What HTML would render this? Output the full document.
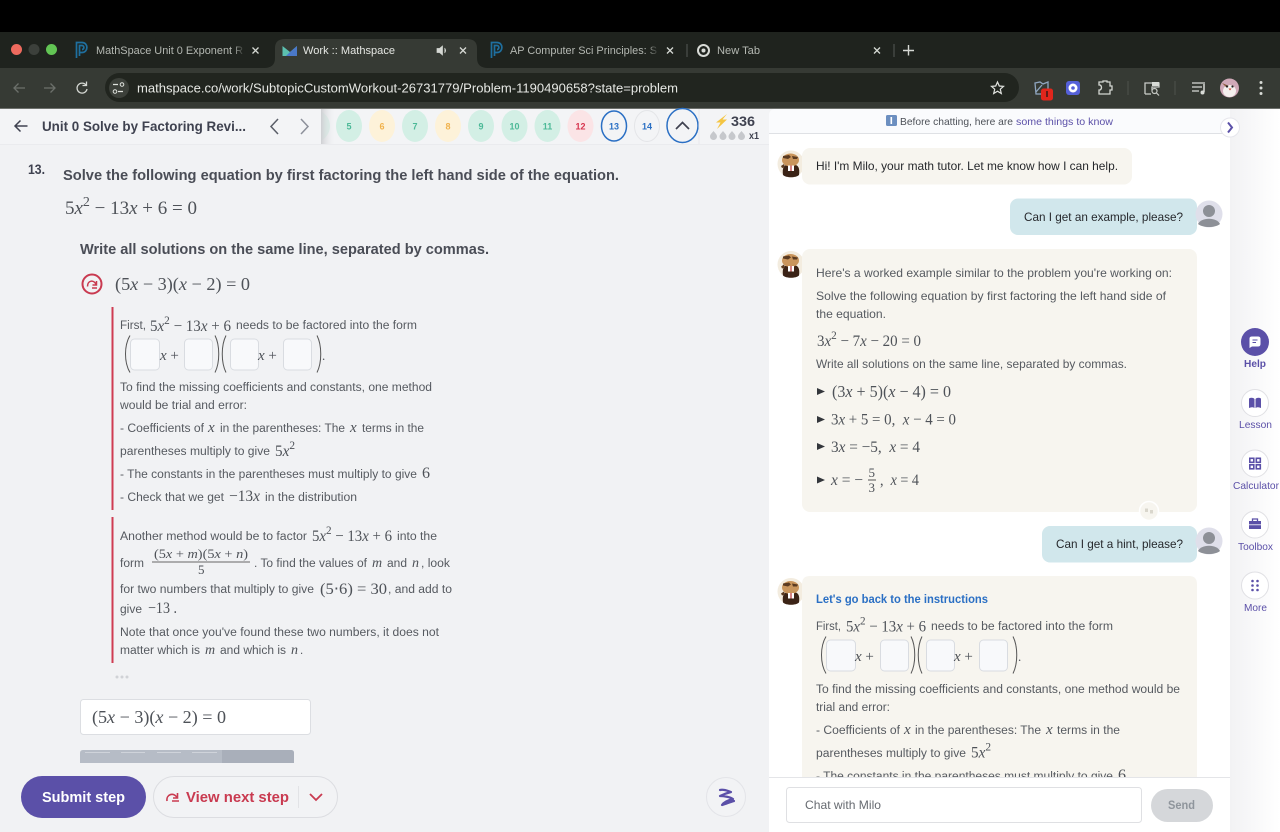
<!DOCTYPE html>
<html><head><meta charset="utf-8"><title>Work :: Mathspace</title>
<style>
html,body{margin:0;padding:0;background:#000;width:1280px;height:832px;overflow:hidden}
svg{display:block;filter:blur(.35px)}
text{font-family:"Liberation Sans",sans-serif;font-size:11.5px;fill:#565a60;white-space:pre}
.m,.m tspan{font-family:"Liberation Serif",serif}
.m{font-size:16px;fill:#4e5258}
.i{font-style:italic}
.tab{font-size:11px;fill:#b4b8b2}
.b{font-weight:bold}
.d{fill:#3f4250}
.c{font-size:12px}
.k{fill:#26282c}
.p{font-size:9px;font-weight:bold;text-anchor:middle}
.s{font-size:10.5px;fill:#5b50a8}
</style></head><body>
<svg width="1280" height="832" viewBox="0 0 1280 832" xmlns="http://www.w3.org/2000/svg">
<defs>
<g id="milo"><circle r="13.500" fill="#f3ecdf"/><path d="M-8 11C-9 4-7 1-4 1H4C7 1 9 4 8 11C5 14-5 14-8 11Z" fill="#3b2316"/><ellipse cx="-.5" cy="-4" rx="8.500" ry="6.500" fill="#c9955c"/><path d="M-8-8L-2-9 0-7-3-5-8-6ZM1-8L7-7 6-5 2-5Z" fill="#5a3a20"/><path d="M-10 2L-7 0-6 3-9 4Z" fill="#5a3a20"/><path d="M-3 1.500H3V7H-3Z" fill="#fff"/><path d="M-.6 1.500H.6V7H-.6Z" fill="#b33"/></g>
<g id="user"><circle r="13.500" fill="#dfdfea"/><circle cy="-3" r="6" fill="#8d9097"/><path d="M-11 10C-8 3 8 3 11 10C6 14-6 14-11 10Z" fill="#8d9097"/></g>
<g id="pp" fill="none" stroke="#1f6f9f" stroke-width="1.700"><path d="M-4.500 8V-7.500H1C7.500-7.500 7.500 2.500 1 2.500H-1.500"/><path d="M-1.500 6V-4.500H1C3.500-4.500 3.500-.5 1-.5"/></g>
<path id="x" d="M-3-3L3 3M3-3L-3 3" stroke="#d5d8d3" stroke-width="1.300" fill="none"/>
<path id="tri" d="M-4-3.500L4 0-4 3.500Z" fill="#33363b"/>
<path id="drop" d="M0-5C1.500-3 3.500-1.500 3.500.5A3.500 3.500 0 0 1-3.500.5C-3.500-1.500-1.500-3 0-5Z" fill="#c6c8cc"/>
<g id="boxes"><path d="M5 0C-1 10-1 27 5 37M90 0C95 10 95 27 90 37M101 0C96 10 96 27 101 37M192 0C197 10 197 27 192 37" fill="none" stroke="#555" stroke-width="1"/>
<g fill="#f8f9fb" stroke="#d9dce1"><rect x="5.500" y="3.500" width="29" height="31" rx="4"/><rect x="59.500" y="3.500" width="28" height="31" rx="4"/><rect x="105.500" y="3.500" width="28" height="31" rx="4"/><rect x="158.500" y="3.500" width="28" height="31" rx="4"/></g></g>
<linearGradient id="fade"><stop offset="0" stop-color="#1f231e" stop-opacity="0"/><stop offset="1" stop-color="#1f231e"/></linearGradient>
<linearGradient id="fd"><stop offset="0" stop-color="#cfd0d3"/><stop offset="1" stop-color="#f3f4f6" stop-opacity="0"/></linearGradient>
<linearGradient id="sb"><stop offset="0" stop-color="#f2f2f4"/><stop offset="1" stop-color="#fff"/></linearGradient>
</defs>

<!-- browser chrome -->
<rect width="1280" height="32" fill="#000"/>
<rect y="32" width="1280" height="37" fill="#1f231e"/>
<rect y="68" width="1280" height="40" fill="#363a34"/>
<circle cx="16.500" cy="49.500" r="5.500" fill="#ee6a5e"/><circle cx="34" cy="49.500" r="5.500" fill="#3c403b"/><circle cx="51.500" cy="49.500" r="5.500" fill="#62c554"/>
<path d="M264 68Q275 68 275 58V48Q275 39 285 39H467Q477 39 477 48V58Q477 68 488 68Z" fill="#363a34"/>
<use href="#pp" x="81" y="50"/><use href="#pp" x="496" y="50"/>
<path d="M282.500 46L290 52 297 46V56H282.500Z" fill="#5cc0b0"/><path d="M290 52L297 46V56H286Z" fill="#4a78c8"/>
<text class="tab" x="96" y="54" textLength="147" lengthAdjust="spacingAndGlyphs">MathSpace Unit 0 Exponent R</text>
<rect x="233" y="42" width="12" height="16" fill="url(#fade)"/>
<text class="tab" x="303" y="54" textLength="92" lengthAdjust="spacingAndGlyphs" style="fill:#e4e6e2">Work :: Mathspace</text>
<text class="tab" x="510" y="54" textLength="147" lengthAdjust="spacingAndGlyphs">AP Computer Sci Principles: S</text>
<rect x="647" y="42" width="12" height="16" fill="url(#fade)"/>
<text class="tab" x="717" y="54" textLength="43" lengthAdjust="spacingAndGlyphs">New Tab</text>
<use href="#x" x="255.500" y="50.500"/><use href="#x" x="463" y="50.500"/><use href="#x" x="670" y="50.500"/><use href="#x" x="877" y="50.500"/>
<path d="M437 48.500H439.500L442.500 46V55L439.500 52.500H437ZM444.500 48C446 49.500 446 51.500 444.500 53" fill="#d5d8d3" stroke="#d5d8d3" stroke-width=".7"/>
<path d="M687 44V57M894 44V57" stroke="#555955"/>
<circle cx="703.500" cy="50.500" r="5.500" fill="#1f231e" stroke="#d8dbd6" stroke-width="2"/><circle cx="703.500" cy="50.500" r="2" fill="#d8dbd6"/>
<path d="M908.500 45V55.500M903 50.500H914" stroke="#d5d8d3" stroke-width="1.400"/>
<rect x="105" y="73" width="914" height="29" rx="14.500" fill="#21251f"/>
<circle cx="119" cy="88" r="10" fill="#3c403a"/>
<path d="M113 84.500H118M123 91.500H118" stroke="#dfe2dd" stroke-width="1.200"/><circle cx="122" cy="84.500" r="1.800" fill="none" stroke="#dfe2dd"/><circle cx="115" cy="91.500" r="1.800" fill="none" stroke="#dfe2dd"/>
<path d="M25 88H14M18.500 83.500L14 88l4.500 4.500" fill="none" stroke="#6c706b" stroke-width="1.300"/>
<path d="M44 88H55M50.500 83.500L55 88l-4.500 4.500" fill="none" stroke="#6c706b" stroke-width="1.300"/>
<path d="M86 85A5 5 0 1 0 87 89M86.500 81.500V85.500H82.500" fill="none" stroke="#d5d8d3" stroke-width="1.300"/>
<text x="137" y="92.500" textLength="541" lengthAdjust="spacingAndGlyphs" style="font-size:13px;fill:#e6e8e4">mathspace.co/work/SubtopicCustomWorkout-26731779/Problem-1190490658?state=problem</text>
<path d="M997.500 82L999.300 86 1003.500 86.400 1000.300 89.200 1001.300 93.500 997.500 91.200 993.700 93.500 994.700 89.200 991.500 86.400 995.700 86Z" fill="none" stroke="#e2e4e0" stroke-width="1.200"/>
<path d="M1035 83L1040 82 1043 84 1048 82V90L1042 94 1036 94ZM1036 92L1042 85" fill="none" stroke="#8fa6c0" stroke-width="1.300"/>
<rect x="1041" y="88.500" width="12" height="12" rx="2.500" fill="#e0261c"/><rect x="1046.300" y="91" width="1.400" height="6" fill="#2a1a18"/>
<rect x="1066" y="81" width="14" height="14" rx="3" fill="#5560d8"/><circle cx="1073" cy="88" r="4.500" fill="#fff"/><circle cx="1073" cy="88" r="1.800" fill="#5560d8"/>
<path d="M1099 82H1103V81H1107V82H1110V86H1112V90H1110V94H1099V90H1100C1102 89 1102 86 1100 85H1099Z" fill="none" stroke="#d3d6d1" stroke-width="1.300"/>
<path d="M1128 81V95M1175 81V95" stroke="#4e524d"/>
<path d="M1145 94V83H1159V87H1152V90" fill="none" stroke="#c8cbc6" stroke-width="1.300"/><path d="M1145 94H1151" stroke="#c8cbc6" stroke-width="1.300"/><rect x="1152" y="82" width="7" height="4" fill="#d8dbd6"/><circle cx="1154.500" cy="91" r="2.500" fill="none" stroke="#c8cbc6" stroke-width="1.200"/><path d="M1156.500 93L1159 95.500" stroke="#c8cbc6" stroke-width="1.200"/>
<path d="M1192 83H1205M1192 87H1202M1192 91H1199" stroke="#d8dbd6" stroke-width="1.300"/><path d="M1204 84V92" stroke="#d8dbd6" stroke-width="1.500"/><circle cx="1202.500" cy="92.500" r="2" fill="#d8dbd6"/>
<circle cx="1229.500" cy="88" r="9.500" fill="#d0a9b8"/><ellipse cx="1229.500" cy="91" rx="6.500" ry="6" fill="#f4f0ee"/><path d="M1222 83L1229 86 1226 87Z" fill="#8a5a3a"/><circle cx="1227" cy="86.500" r="1.100" fill="#222"/><circle cx="1232.500" cy="86.500" r="1.100" fill="#222"/><path d="M1228.500 88.500H1231.500L1230 90.500Z" fill="#c8452e"/>
<circle cx="1261" cy="82.500" r="1.500" fill="#d8dbd6"/><circle cx="1261" cy="88" r="1.500" fill="#d8dbd6"/><circle cx="1261" cy="93.500" r="1.500" fill="#d8dbd6"/>

<!-- left panel -->
<rect y="108" width="775" height="724" fill="#f1f2f4"/>
<rect y="108" width="775" height="36" fill="#f3f4f6"/>
<rect y="144" width="775" height="1" fill="#eaebee"/>
<rect y="108" width="1280" height="1" fill="#6d706c"/>
<path d="M27.500 126H15.500M20.500 120.500L15 126l5.500 5.500" fill="none" stroke="#3f4250" stroke-width="1.500"/>
<text class="b d" x="42" y="131" textLength="204" lengthAdjust="spacingAndGlyphs" style="font-size:14px">Unit 0 Solve by Factoring Revi...</text>
<path d="M278 119L271 126.500 278 134" fill="none" stroke="#5a5e68" stroke-width="1.500"/>
<path d="M301 119L308 126.500 301 134" fill="none" stroke="#8c909a" stroke-width="1.500"/>
<path d="M321 111C327 115 330 120 330 126C330 132 327 137 321 141Z" fill="#d3efe5"/>
<rect x="321" y="109" width="15" height="35" fill="url(#fd)"/>
<g>
<ellipse cx="349" cy="126" rx="13" ry="16" fill="#d3efe5"/><text class="p" x="349" y="129.500" style="fill:#4cb997">5</text>
<ellipse cx="382" cy="126" rx="13" ry="16" fill="#fdf2d9"/><text class="p" x="382" y="129.500" style="fill:#f0b24c">6</text>
<ellipse cx="415" cy="126" rx="13" ry="16" fill="#d3efe5"/><text class="p" x="415" y="129.500" style="fill:#4cb997">7</text>
<ellipse cx="448" cy="126" rx="13" ry="16" fill="#fdf2d9"/><text class="p" x="448" y="129.500" style="fill:#f0b24c">8</text>
<ellipse cx="481" cy="126" rx="13" ry="16" fill="#d3efe5"/><text class="p" x="481" y="129.500" style="fill:#4cb997">9</text>
<ellipse cx="514.500" cy="126" rx="13" ry="16" fill="#d3efe5"/><text class="p" x="514.500" y="129.500" style="fill:#4cb997">10</text>
<ellipse cx="547.500" cy="126" rx="13" ry="16" fill="#d3efe5"/><text class="p" x="547.500" y="129.500" style="fill:#4cb997">11</text>
<ellipse cx="580.500" cy="126" rx="13" ry="16" fill="#fbe4e6" /><text class="p" x="580.500" y="129.500" style="fill:#d7354f">12</text>
<ellipse cx="614" cy="126" rx="12.500" ry="15" fill="#f3f4f6" stroke="#2a6fc4" stroke-width="1.500"/><text class="p" x="614" y="129.500" style="fill:#2a6fc4">13</text>
<ellipse cx="647" cy="126" rx="12.500" ry="15.500" fill="#f3f4f6" stroke="#e4e5e8"/><text class="p" x="647" y="129.500" style="fill:#2a6fc4">14</text>
</g>
<ellipse cx="682.500" cy="125.500" rx="15.500" ry="17" fill="#f3f4f6" stroke="#2a6fc4" stroke-width="1.500"/>
<path d="M676 129L682.500 122.500 689 129" fill="none" stroke="#3f4250" stroke-width="1.700"/>
<rect x="698.500" y="109" width="1" height="35" fill="#e8e9ec"/>
<path d="M727 114L716 122.500H720.500L717 129 727 119.500H722.500Z" fill="#f4c542"/>
<text class="b d" x="731" y="126" textLength="24" lengthAdjust="spacingAndGlyphs" style="font-size:14px">336</text>
<use href="#drop" x="713.500" y="136"/><use href="#drop" x="723" y="136"/><use href="#drop" x="732" y="136"/><use href="#drop" x="741.500" y="136"/>
<text class="b d" x="749" y="139" textLength="10" lengthAdjust="spacingAndGlyphs" style="font-size:10px">x1</text>

<!-- left content -->
<text class="b d" x="28" y="174" textLength="17" lengthAdjust="spacingAndGlyphs" style="font-size:14px">13.</text>
<text class="b d" x="63" y="180" textLength="556" lengthAdjust="spacingAndGlyphs" style="font-size:15px;fill:#4a4d56">Solve the following equation by first factoring the left hand side of the equation.</text>
<text class="m" x="65" y="214" textLength="132" lengthAdjust="spacingAndGlyphs" style="font-size:19px">5<tspan class="i">x</tspan><tspan dy="-8" font-size="14">2</tspan><tspan dy="8"> − 13</tspan><tspan class="i">x</tspan> + 6 = 0</text>
<text class="b d" x="80" y="254" textLength="409" lengthAdjust="spacingAndGlyphs" style="font-size:15px;fill:#4a4d56">Write all solutions on the same line, separated by commas.</text>
<circle cx="92" cy="284" r="9.500" fill="none" stroke="#c93a50" stroke-width="2"/>
<path d="M87.500 286.500C87.500 280 94 279.500 96 284.500M96.500 281V285H92.500M92 288H97" fill="none" stroke="#c93a50" stroke-width="1.500"/>
<text class="m" x="115" y="290" textLength="135" lengthAdjust="spacingAndGlyphs" style="font-size:18px">(5<tspan class="i">x</tspan> − 3)(<tspan class="i">x</tspan> − 2) = 0</text>
<rect x="111.500" y="307" width="2" height="203" fill="#cf3c52"/>
<rect x="111.500" y="517" width="2" height="146" fill="#cf3c52"/>

<text x="120" y="329" textLength="26" lengthAdjust="spacingAndGlyphs">First,</text>
<text class="m" x="150" y="331" textLength="81" lengthAdjust="spacingAndGlyphs">5<tspan class="i">x</tspan><tspan dy="-7" font-size="12">2</tspan><tspan dy="7"> − 13</tspan><tspan class="i">x</tspan> + 6</text>
<text x="236" y="329" textLength="181" lengthAdjust="spacingAndGlyphs">needs to be factored into the form</text>
<use href="#boxes" x="125" y="335.500"/>
<text class="m" x="160" y="360" style="font-size:15px"><tspan class="i">x</tspan> +</text>
<text class="m" x="258" y="360" style="font-size:15px"><tspan class="i">x</tspan> +</text>
<text class="m" x="322" y="360" style="font-size:13px">.</text>
<text x="120" y="391" textLength="312" lengthAdjust="spacingAndGlyphs">To find the missing coefficients and constants, one method</text>
<text x="120" y="409" textLength="127" lengthAdjust="spacingAndGlyphs">would be trial and error:</text>
<text x="120" y="432" textLength="84" lengthAdjust="spacingAndGlyphs">- Coefficients of</text>
<text class="m i" x="208" y="432" style="font-size:15px">x</text>
<text x="220" y="432" textLength="125" lengthAdjust="spacingAndGlyphs">in the parentheses: The</text>
<text class="m i" x="350" y="432" style="font-size:15px">x</text>
<text x="362" y="432" textLength="62" lengthAdjust="spacingAndGlyphs">terms in the</text>
<text x="120" y="455" textLength="150" lengthAdjust="spacingAndGlyphs">parentheses multiply to give</text>
<text class="m" x="275" y="456" textLength="20" lengthAdjust="spacingAndGlyphs">5<tspan class="i">x</tspan><tspan dy="-7" font-size="12">2</tspan></text>
<text x="120" y="478" textLength="297" lengthAdjust="spacingAndGlyphs">- The constants in the parentheses must multiply to give</text>
<text class="m" x="422" y="478">6</text>
<text x="120" y="501" textLength="104" lengthAdjust="spacingAndGlyphs">- Check that we get</text>
<text class="m" x="229" y="501" textLength="31" lengthAdjust="spacingAndGlyphs">−13<tspan class="i">x</tspan></text>
<text x="265" y="501" textLength="92" lengthAdjust="spacingAndGlyphs">in the distribution</text>

<text x="120" y="540" textLength="187" lengthAdjust="spacingAndGlyphs">Another method would be to factor</text>
<text class="m" x="312" y="541" textLength="80" lengthAdjust="spacingAndGlyphs">5<tspan class="i">x</tspan><tspan dy="-7" font-size="12">2</tspan><tspan dy="7"> − 13</tspan><tspan class="i">x</tspan> + 6</text>
<text x="397" y="540" textLength="40" lengthAdjust="spacingAndGlyphs">into the</text>
<text x="120" y="567" textLength="24" lengthAdjust="spacingAndGlyphs">form</text>
<text class="m" x="154" y="558" textLength="94" lengthAdjust="spacingAndGlyphs" style="font-size:13px">(5<tspan class="i">x</tspan> + <tspan class="i">m</tspan>)(5<tspan class="i">x</tspan> + <tspan class="i">n</tspan>)</text>
<rect x="152" y="561.500" width="98" height="1" fill="#666"/>
<text class="m" x="198" y="574" style="font-size:13px">5</text>
<text x="254" y="567" textLength="113" lengthAdjust="spacingAndGlyphs">. To find the values of</text>
<text class="m i" x="372" y="567" style="font-size:14px">m</text>
<text x="387" y="567" textLength="20" lengthAdjust="spacingAndGlyphs">and</text>
<text class="m i" x="412" y="567" style="font-size:14px">n</text>
<text x="421" y="567" textLength="29" lengthAdjust="spacingAndGlyphs">, look</text>
<text x="120" y="593" textLength="194" lengthAdjust="spacingAndGlyphs">for two numbers that multiply to give</text>
<text class="m" x="320" y="594" textLength="67" lengthAdjust="spacingAndGlyphs">(5⋅6) = 30</text>
<text x="388" y="593" textLength="64" lengthAdjust="spacingAndGlyphs">, and add to</text>
<text x="120" y="613" textLength="22" lengthAdjust="spacingAndGlyphs">give</text>
<text class="m" x="148" y="613" textLength="29" lengthAdjust="spacingAndGlyphs">−13 .</text>
<text x="120" y="636" textLength="319" lengthAdjust="spacingAndGlyphs">Note that once you've found these two numbers, it does not</text>
<text x="120" y="654" textLength="80" lengthAdjust="spacingAndGlyphs">matter which is</text>
<text class="m i" x="205" y="654" style="font-size:14px">m</text>
<text x="220" y="654" textLength="66" lengthAdjust="spacingAndGlyphs">and which is</text>
<text class="m i" x="291" y="654" style="font-size:14px">n</text>
<text x="300" y="654">.</text>
<g fill="#d0d2d6"><circle cx="117" cy="677" r="1.500"/><circle cx="122" cy="677" r="1.500"/><circle cx="127" cy="677" r="1.500"/></g>

<rect x="80.500" y="699.500" width="230" height="35" rx="3" fill="#fff" stroke="#dcdee2"/>
<text class="m" x="92" y="723" textLength="134" lengthAdjust="spacingAndGlyphs" style="font-size:18px">(5<tspan class="i">x</tspan> − 3)(<tspan class="i">x</tspan> − 2) = 0</text>
<path d="M80 763V753Q80 750 83 750H291Q294 750 294 753V763Z" fill="#b6bcc6"/>
<path d="M222 750H291Q294 750 294 753V763H222Z" fill="#a9afba"/>
<path d="M85 752.500H110M121 752.500H145M157 752.500H181M192 752.500H217" stroke="#cfd3da" stroke-width="1"/>
<rect y="763" width="769" height="69" fill="#f1f2f4"/>

<rect x="21" y="776" width="125" height="42" rx="21" fill="#5b50a8"/>
<text class="b" x="42" y="802" textLength="83" lengthAdjust="spacingAndGlyphs" style="font-size:15px;fill:#fff">Submit step</text>
<rect x="153.500" y="776.500" width="184" height="41" rx="20.500" fill="#f2f3f5" stroke="#dcdde1"/>
<path d="M167 801C166 794 174 792 177 797.500M177.500 793V798H173M172 801H179" fill="none" stroke="#c93a50" stroke-width="1.600"/>
<text class="b" x="186" y="802" textLength="103" lengthAdjust="spacingAndGlyphs" style="font-size:15px;fill:#c93a50">View next step</text>
<rect x="298" y="786" width="1" height="22" fill="#e2e3e6"/>
<path d="M310 794L316 800 322 794" fill="none" stroke="#c93a50" stroke-width="1.800"/>
<circle cx="726" cy="797" r="19.500" fill="#f2f3f5" stroke="#e3e4e8"/>
<path d="M720 790C724 789 728 791 731 792C727 793 722 795 720 796C724 796 730 797 733 799C729 800 724 802 722 805C726 804 730 802 734 801" fill="none" stroke="#5b50a8" stroke-width="2.200" stroke-linecap="round" stroke-linejoin="round"/>

<!-- right panel -->
<rect x="1225" y="109" width="55" height="723" fill="#f6f6f7"/>
<rect x="1230" y="109" width="50" height="723" fill="url(#sb)"/>
<path d="M769 116Q769 109 776 109H1230V832H776Q769 832 769 825Z" fill="#fff"/>
<path d="M769 133V116Q769 109 776 109H1230V133Z" fill="#fafbfd"/>
<rect x="769" y="133" width="461" height="1" fill="#dfe1e5"/>
<rect x="886" y="115" width="11" height="11" rx="1.500" fill="#6c8fc0"/><rect x="890.500" y="117" width="1.600" height="7" fill="#fff"/>
<text x="900" y="125" textLength="113" lengthAdjust="spacingAndGlyphs" style="font-size:10.500px;fill:#4d5158">Before chatting, here are</text>
<text x="1016" y="125" textLength="97" lengthAdjust="spacingAndGlyphs" style="font-size:10.500px;fill:#5b50a8">some things to know</text>
<circle cx="1230" cy="127.500" r="9.500" fill="#fff" stroke="#e6e6ec"/>
<path d="M1228 122.500L1232 127.500 1228 132.500" fill="none" stroke="#5b50a8" stroke-width="2"/>

<use href="#milo" x="791" y="164"/>
<rect x="802" y="148" width="330" height="36.500" rx="8" fill="#f7f5ef"/>
<text class="c k" x="816" y="170" textLength="302" lengthAdjust="spacingAndGlyphs">Hi! I'm Milo, your math tutor. Let me know how I can help.</text>
<rect x="1010" y="198.500" width="187" height="36.500" rx="8" fill="#d1e7ec"/>
<text class="c k" x="1024" y="221" textLength="159" lengthAdjust="spacingAndGlyphs">Can I get an example, please?</text>
<use href="#user" x="1209" y="214"/>

<use href="#milo" x="791" y="264.500"/>
<rect x="802" y="249" width="395" height="263" rx="8" fill="#f7f5ef"/>
<text class="c" x="816" y="277" textLength="356" lengthAdjust="spacingAndGlyphs">Here's a worked example similar to the problem you're working on:</text>
<text class="c" x="816" y="300" textLength="350" lengthAdjust="spacingAndGlyphs">Solve the following equation by first factoring the left hand side of</text>
<text class="c" x="816" y="318" textLength="70" lengthAdjust="spacingAndGlyphs">the equation.</text>
<text class="m" x="817" y="346" textLength="104" lengthAdjust="spacingAndGlyphs">3<tspan class="i">x</tspan><tspan dy="-7" font-size="12">2</tspan><tspan dy="7"> − 7</tspan><tspan class="i">x</tspan> − 20 = 0</text>
<text class="c" x="816" y="368" textLength="311" lengthAdjust="spacingAndGlyphs">Write all solutions on the same line, separated by commas.</text>
<use href="#tri" x="821" y="391.500"/>
<text class="m" x="832" y="397" textLength="119" lengthAdjust="spacingAndGlyphs" style="font-size:17px">(3<tspan class="i">x</tspan> + 5)(<tspan class="i">x</tspan> − 4) = 0</text>
<use href="#tri" x="821" y="419.500"/>
<text class="m" x="831" y="424.500" textLength="125" lengthAdjust="spacingAndGlyphs">3<tspan class="i">x</tspan> + 5 = 0,  <tspan class="i">x</tspan> − 4 = 0</text>
<use href="#tri" x="821" y="446.500"/>
<text class="m" x="831" y="452" textLength="89" lengthAdjust="spacingAndGlyphs">3<tspan class="i">x</tspan> = −5,  <tspan class="i">x</tspan> = 4</text>
<use href="#tri" x="821" y="480"/>
<text class="m" x="831" y="485" textLength="32" lengthAdjust="spacingAndGlyphs"><tspan class="i">x</tspan> = −</text>
<text class="m" x="868.500" y="477" style="font-size:13px">5</text>
<rect x="868" y="479.500" width="8" height="1" fill="#555"/>
<text class="m" x="868.500" y="492" style="font-size:13px">3</text>
<text class="m" x="880" y="485" textLength="39" lengthAdjust="spacingAndGlyphs">,  <tspan class="i">x</tspan> = 4</text>
<circle cx="1149" cy="511" r="9.500" fill="#f7f5ef" stroke="#fff" stroke-width="1.500"/>
<path d="M1145 508.500H1148V512H1145ZM1150 510H1153V513.500H1150Z" fill="#d9d6cc"/>

<rect x="1042" y="526" width="155" height="36.500" rx="8" fill="#d1e7ec"/>
<text class="c k" x="1056" y="548" textLength="127" lengthAdjust="spacingAndGlyphs">Can I get a hint, please?</text>
<use href="#user" x="1209" y="541"/>

<use href="#milo" x="791" y="591.500"/>
<path d="M802 777V584Q802 576 810 576H1189Q1197 576 1197 584V777Z" fill="#f7f5ef"/>
<text class="b c" x="816" y="603" textLength="172" lengthAdjust="spacingAndGlyphs" style="fill:#2a6fc4">Let's go back to the instructions</text>
<text x="816" y="630" textLength="25" lengthAdjust="spacingAndGlyphs">First,</text>
<text class="m" x="846" y="631.500" textLength="80" lengthAdjust="spacingAndGlyphs">5<tspan class="i">x</tspan><tspan dy="-7" font-size="12">2</tspan><tspan dy="7"> − 13</tspan><tspan class="i">x</tspan> + 6</text>
<text x="931" y="630" textLength="182" lengthAdjust="spacingAndGlyphs">needs to be factored into the form</text>
<use href="#boxes" x="821" y="636.500"/>
<text class="m" x="855" y="661" style="font-size:15px"><tspan class="i">x</tspan> +</text>
<text class="m" x="954" y="661" style="font-size:15px"><tspan class="i">x</tspan> +</text>
<text class="m" x="1018" y="661" style="font-size:13px">.</text>
<text x="816" y="693" textLength="364" lengthAdjust="spacingAndGlyphs">To find the missing coefficients and constants, one method would be</text>
<text x="816" y="711" textLength="74" lengthAdjust="spacingAndGlyphs">trial and error:</text>
<text x="816" y="734" textLength="84" lengthAdjust="spacingAndGlyphs">- Coefficients of</text>
<text class="m i" x="904" y="734" style="font-size:15px">x</text>
<text x="915" y="734" textLength="126" lengthAdjust="spacingAndGlyphs">in the parentheses: The</text>
<text class="m i" x="1046" y="734" style="font-size:15px">x</text>
<text x="1057" y="734" textLength="63" lengthAdjust="spacingAndGlyphs">terms in the</text>
<text x="816" y="757" textLength="150" lengthAdjust="spacingAndGlyphs">parentheses multiply to give</text>
<text class="m" x="971" y="757.500" textLength="20" lengthAdjust="spacingAndGlyphs">5<tspan class="i">x</tspan><tspan dy="-7" font-size="12">2</tspan></text>
<text x="816" y="780" textLength="297" lengthAdjust="spacingAndGlyphs">- The constants in the parentheses must multiply to give</text>
<text class="m" x="1118" y="780">6</text>

<rect x="769" y="777" width="461" height="55" fill="#fff"/>
<rect x="769" y="777" width="461" height="1" fill="#e4e5e8"/>
<rect x="786.500" y="787.500" width="355" height="35" rx="3" fill="#fff" stroke="#dfe0e3"/>
<text class="c" x="805" y="809" textLength="76" lengthAdjust="spacingAndGlyphs" style="fill:#666a70">Chat with Milo</text>
<rect x="1151" y="789" width="62" height="33" rx="16.500" fill="#d5d7da"/>
<text class="b c" x="1168" y="809" textLength="27" lengthAdjust="spacingAndGlyphs" style="fill:#8f959c">Send</text>

<!-- side toolbar -->
<circle cx="1255" cy="342" r="14" fill="#5b50a8"/>
<path d="M1249.500 338.500Q1249.500 336.500 1252 336.500H1258Q1260.500 336.500 1260.500 339V344Q1260.500 346.500 1258 346.500H1252L1249.500 348Z" fill="#fff"/>
<path d="M1252.500 340H1257.500M1252.500 342.500H1256" stroke="#5b50a8"/>
<text class="s b" x="1244" y="367" textLength="22" lengthAdjust="spacingAndGlyphs">Help</text>
<circle cx="1255" cy="403" r="13.500" fill="#fff" stroke="#e0e0e4"/>
<path d="M1249 398.500C1251 397.500 1253 397.500 1254.500 399V408C1253 407 1251 407 1249 408ZM1255.500 399C1257 397.500 1259 397.500 1261 398.500V408C1259 407 1257 407 1255.500 408Z" fill="#5b50a8"/>
<text class="s" x="1239" y="428" textLength="33" lengthAdjust="spacingAndGlyphs">Lesson</text>
<circle cx="1255" cy="463.500" r="13.500" fill="#fff" stroke="#e0e0e4"/>
<g fill="none" stroke="#5b50a8" stroke-width="1.600"><rect x="1249.800" y="458.300" width="4" height="4"/><rect x="1256.300" y="458.300" width="4" height="4"/><rect x="1249.800" y="464.800" width="4" height="4"/><rect x="1256.300" y="464.800" width="4" height="4"/></g>
<text class="s" x="1233" y="489" textLength="46" lengthAdjust="spacingAndGlyphs">Calculator</text>
<circle cx="1255" cy="524.500" r="13.500" fill="#fff" stroke="#e0e0e4"/>
<path d="M1249 521H1261V529H1249Z" fill="#5b50a8"/><path d="M1252.500 521V519H1257.500V521" fill="none" stroke="#5b50a8" stroke-width="1.300"/><path d="M1249 524.800H1261" stroke="#fff" stroke-width=".8"/>
<text class="s" x="1238" y="550" textLength="35" lengthAdjust="spacingAndGlyphs">Toolbox</text>
<circle cx="1255" cy="585.500" r="13.500" fill="#fff" stroke="#e0e0e4"/>
<g fill="#5b50a8"><circle cx="1252.500" cy="581" r="1.300"/><circle cx="1257.500" cy="581" r="1.300"/><circle cx="1252.500" cy="585.500" r="1.300"/><circle cx="1257.500" cy="585.500" r="1.300"/><circle cx="1252.500" cy="590" r="1.300"/><circle cx="1257.500" cy="590" r="1.300"/></g>
<text class="s" x="1244" y="611" textLength="23" lengthAdjust="spacingAndGlyphs">More</text>
</svg>
</body></html>
